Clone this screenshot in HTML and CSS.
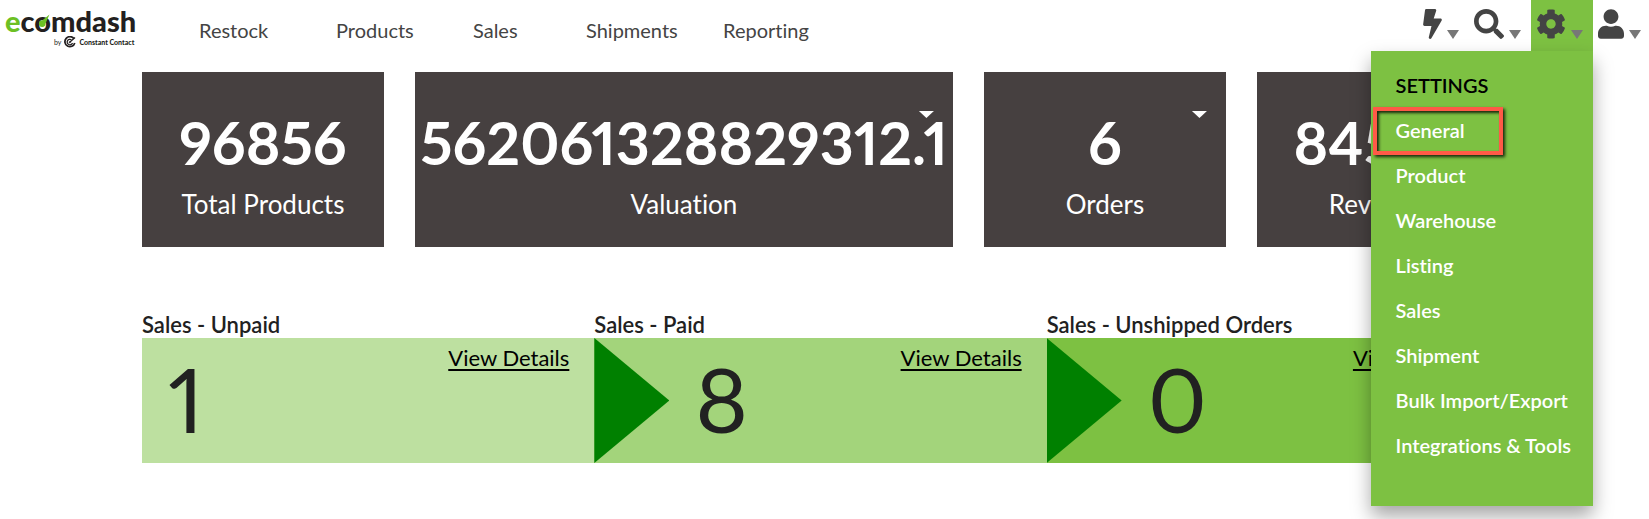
FILE: index.html
```html
<!DOCTYPE html>
<html lang="en">
<head>
<meta charset="utf-8">
<title>ecomdash</title>
<link rel="stylesheet" href="styles.css">
</head>
<body>
<header class="topbar">
  <a class="logo" href="#">
    <span class="logo-name"><span class="logo-e">e</span>c<span class="logo-o">o<svg class="logo-needle" viewBox="0 0 12 14" aria-hidden="true"><path d="M11.500 .5 L4.500 6.300 A3.300 3.300 0 1 0 7.500 9.500 Z" fill="#6cc024"/></svg></span>mdash</span>
    <span class="logo-by"><span class="by">by</span>
      <svg class="cc" viewBox="0 0 24 24" aria-hidden="true" fill="none" stroke="#231f20"><path d="M20 5.500A10 10 0 1 0 21.500 14" stroke-width="3.500"/><path d="M15 7.500A5.500 5.500 0 1 0 17 14" stroke-width="2.500"/><path d="M12 12L22 3" stroke-width="2.500"/><circle cx="11.500" cy="12.500" r="1.500" fill="#231f20"/></svg>
      <span class="cc-name">Constant Contact</span></span>
  </a>
  <nav class="nav" aria-label="Main">
    <a href="#">Restock</a>
    <a href="#">Products</a>
    <a class="short" href="#">Sales</a>
    <a href="#">Shipments</a>
    <a href="#">Reporting</a>
  </nav>
  <div class="tools">
    <button class="tool" aria-label="Quick actions"><svg class="icon bolt" viewBox="0 0 320 512"><path d="M296 160H180.600l42.600-129.800C227.200 15 215.700 0 200 0H56C44 0 33.800 8.900 32.200 20.800l-32 240C-1.700 275.200 9.500 288 24 288h118.700L96.600 482.500c-3.600 15.200 8 29.500 23.300 29.500 8.400 0 16.400-4.400 20.800-12l176-304c9.300-15.900-2.200-36-20.700-36z"/></svg><span class="caret"></span></button>
    <button class="tool" aria-label="Search"><svg class="icon" viewBox="0 0 512 512"><path d="M505 442.700L405.300 343c-4.500-4.500-10.600-7-17-7H372c27.600-35.300 44-79.700 44-128C416 93.100 322.900 0 208 0S0 93.100 0 208s93.100 208 208 208c48.300 0 92.700-16.400 128-44v16.300c0 6.400 2.500 12.500 7 17l99.700 99.700c9.400 9.400 24.600 9.400 33.900 0l28.300-28.300c9.400-9.400 9.400-24.600.1-34zM208 336c-70.700 0-128-57.200-128-128 0-70.700 57.200-128 128-128 70.700 0 128 57.200 128 128 0 70.700-57.200 128-128 128z"/></svg><span class="caret"></span></button>
    <div class="tool-wrap">
      <button class="tool active" aria-label="Settings" aria-expanded="true"><svg class="icon" viewBox="0 0 512 512"><path d="M487.400 315.700l-42.600-24.600c4.300-23.200 4.300-47 0-70.200l42.600-24.600c4.900-2.800 7.100-8.600 5.500-14-11.100-35.600-30-67.800-54.700-94.600-3.800-4.100-10-5.100-14.800-2.300L380.800 110c-17.900-15.400-38.500-27.300-60.800-35.100V25.800c0-5.600-3.900-10.500-9.400-11.700-36.700-8.200-74.300-7.800-109.200 0-5.500 1.200-9.400 6.100-9.400 11.700V75c-22.200 7.900-42.800 19.800-60.800 35.100L88.700 85.500c-4.900-2.800-11-1.900-14.800 2.300-24.700 26.700-43.600 58.900-54.700 94.600-1.700 5.400.6 11.200 5.500 14L67.300 221c-4.300 23.200-4.300 47 0 70.200l-42.600 24.600c-4.900 2.800-7.100 8.600-5.500 14 11.100 35.600 30 67.800 54.700 94.600 3.800 4.100 10 5.100 14.800 2.300l42.600-24.600c17.900 15.400 38.500 27.300 60.800 35.100v49.200c0 5.600 3.900 10.500 9.400 11.700 36.700 8.200 74.300 7.800 109.200 0 5.500-1.200 9.400-6.100 9.400-11.700v-49.200c22.200-7.900 42.800-19.800 60.800-35.100l42.600 24.600c4.900 2.800 11 1.900 14.800-2.300 24.700-26.700 43.600-58.900 54.700-94.600 1.500-5.500-.7-11.300-5.600-14.100zM256 336c-44.100 0-80-35.900-80-80s35.900-80 80-80 80 35.900 80 80-35.900 80-80 80z"/></svg><span class="caret"></span></button>
      <section class="menu" aria-label="Settings menu">
        <h2>SETTINGS</h2>
        <a class="marked" href="#">General</a>
        <a href="#">Product</a>
        <a href="#">Warehouse</a>
        <a href="#">Listing</a>
        <a href="#">Sales</a>
        <a href="#">Shipment</a>
        <a href="#">Bulk Import/Export</a>
        <a href="#">Integrations &amp; Tools</a>
      </section>
    </div>
    <button class="tool last" aria-label="Account"><svg class="icon user" viewBox="0 0 448 512"><path d="M224 256c70.700 0 128-57.300 128-128S294.700 0 224 0 96 57.300 96 128s57.300 128 128 128zm89.600 32h-16.700c-22.200 10.200-46.900 16-72.900 16s-50.600-5.800-72.900-16h-16.700C60.200 288 0 348.200 0 422.400V464c0 26.500 21.500 48 48 48h352c26.500 0 48-21.500 48-48v-41.600c0-74.200-60.200-134.400-134.400-134.400z"/></svg><span class="caret"></span></button>
  </div>
</header>
<main class="content">
  <section class="cards">
    <article class="card"><strong>96856</strong><span>Total Products</span></article>
    <article class="card"><button class="card-toggle" aria-label="Valuation options"></button><strong>562061328829312.1</strong><span>Valuation</span></article>
    <article class="card"><button class="card-toggle" aria-label="Orders options"></button><strong>6</strong><span>Orders</span></article>
    <article class="card"><strong>84596</strong><span>Revenue</span></article>
  </section>
  <section class="pipeline">
    <article class="stage"><h3>Sales - Unpaid</h3><div class="panel light"><span class="count">1</span><a href="#">View Details</a></div></article>
    <article class="stage"><h3>Sales - Paid</h3><div class="panel mid"><i class="arrow"></i><span class="count">8</span><a href="#">View Details</a></div></article>
    <article class="stage"><h3>Sales - Unshipped Orders</h3><div class="panel deep"><i class="arrow"></i><span class="count">0</span><a href="#">View Details</a></div></article>
  </section>
</main>
</body>
</html>
```

FILE: styles.css
```css
* { box-sizing: border-box; }
body {
  margin: 0;
  min-height: 100vh;
  background: #fff;
  color: #212121;
  font-family: Lato, "Open Sans", sans-serif;
  font-variant-numeric: proportional-nums;
  font-variant-ligatures: none;
}
a { color: inherit; text-decoration: none; }
button { border: 0; padding: 0; background: none; font: inherit; cursor: pointer; }

.topbar { display: flex; height: 72px; align-items: flex-start; }
.logo { width: 199px; padding: 6px 0 0 5px; color: #231f20; }
.logo-name { display: block; width: max-content; font-size: 29px; line-height: 30px; font-weight: 900; }
.logo-e { color: #6cc024; }
.logo-o { position: relative; }
.logo-needle { position: absolute; left: 4px; top: 11px; width: 12px; height: 14px; }
.logo-by { display: flex; align-items: center; gap: 3px; padding-left: 49px; font-size: 7px; line-height: 12px; }
.cc { width: 12px; height: 12px; }
.cc-name { font-weight: 900; }

.nav { display: flex; flex: 1; font-size: 20px; line-height: 24px; padding-top: 18px; color: #444; }
.nav a { width: 137px; }
.nav .short { width: 113px; }

.tools { display: flex; }
.tool { display: flex; justify-content: flex-end; align-items: flex-end; gap: 5px; width: 62px; height: 51px; padding: 0 10px 12px 0; }
.tool.last { width: 56px; padding-right: 8px; }
.tool.active { background: #7dc142; }
.icon { height: 30px; width: 30px; flex: none; fill: #444; }
.icon.bolt { width: 19px; }
.icon.user { width: 26px; }
.caret { width: 12px; height: 9px; flex: none; background: #777; clip-path: polygon(0 0, 100% 0, 50% 100%); }
.tool-wrap { position: relative; }
.menu {
  position: absolute; top: 51px; right: 0; z-index: 2;
  padding: 12px 22px 38px 25px;
  background: #7dc142; color: #fff;
  font-size: 20px; line-height: 45px; font-weight: 600; white-space: nowrap;
  box-shadow: 0 10px 18px rgba(0, 0, 0, .35);
}
.menu h2 { margin: 0; font: inherit; color: #000; }
.menu a { display: block; width: max-content; }
.menu .marked { position: relative; }
.menu .marked::after {
  content: ""; position: absolute; inset: -1px -38px -2px -23px;
  border: 4px solid #ff5a47;
  box-shadow: 2px 2px 3px rgba(0, 0, 0, .8), inset 2px 2px 3px rgba(0, 0, 0, .8);
}

.content { padding: 0 150px 0 142px; }
.cards { display: grid; grid-template-columns: 9fr 20fr 9fr 9fr; gap: 31px; }
.card {
  position: relative; display: flex; flex-direction: column; align-items: center;
  min-width: 0; height: 175px; padding-top: 35px;
  background: #464040; color: #fff;
}
.card strong { font-size: 59px; line-height: 72px; font-weight: 700; }
.card span { font-size: 26px; line-height: 50px; }
.card-toggle { position: absolute; right: 19px; top: 39px; width: 15px; height: 7px; background: #fff; clip-path: polygon(0 0, 100% 0, 50% 100%); }

.pipeline { display: grid; grid-template-columns: repeat(3, 1fr); padding-top: 65px; }
.stage h3 { margin: 0; font-size: 22px; line-height: 26px; font-weight: 600; }
.panel { display: flex; align-items: flex-start; height: 125px; padding-right: 25px; }
.panel.light { background: #bde0a0; }
.panel.mid { background: #a3d47b; }
.panel.deep { background: #7dc142; }
.arrow { width: 75px; height: 125px; background: green; clip-path: polygon(0 0, 100% 50%, 0 100%); }
.count { flex: 1; padding-left: 26px; font-size: 90px; line-height: 120px; }
.panel a { color: #000; font-size: 22px; line-height: 26px; padding-top: 7px; text-decoration: underline; text-decoration-thickness: 2px; text-underline-offset: 3px; }
```
